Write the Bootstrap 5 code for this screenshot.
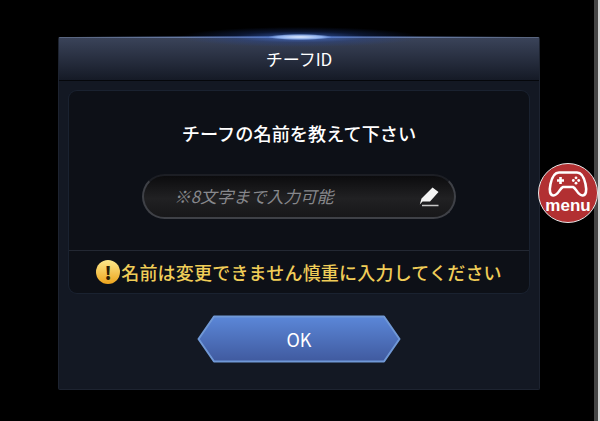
<!doctype html>
<html lang="ja"><head><meta charset="utf-8">
<link href="https://cdn.jsdelivr.net/npm/bootstrap@5.3.0/dist/css/bootstrap.min.css" rel="stylesheet">
<style>
html,body{height:100%;margin:0;background:#000;overflow:hidden}
body{font-family:"Noto Sans CJK JP","Noto Sans",sans-serif;color:#fff}
.stage{width:600px;height:421px;padding:37px 0 0 58px;position:relative;background:linear-gradient(90deg,#000 594px,#454545 594px,#454545 598px,#d8d8d8 598px)}
.glow{position:absolute;left:60px;top:24px;width:480px;height:26px;background:radial-gradient(ellipse 32px 3px at 50% 50%,rgba(230,240,255,.95) 0,rgba(160,195,255,.75) 70%,transparent 100%),radial-gradient(ellipse 120px 10px at 50% 50%,rgba(70,120,230,.7) 0,rgba(35,70,160,.3) 55%,transparent 100%),radial-gradient(ellipse 240px 1.500px at 50% 50%,rgba(130,165,235,.8) 0,transparent 100%)}
.dlg{width:482px;height:353px;background:#131823;border:1px solid #1d2330;border-top-color:#5a6680;border-radius:2px}
.dlg-head{height:43px;background:linear-gradient(#3a4359,#151a26);border-bottom:1px solid #05070b;font-size:17px}
.dlg-body{padding:10px 10px 0}
.well-box{height:202px;background:#0d1017;border-radius:8px;box-shadow:0 0 0 1px #1a2230}
.q-row{height:159px;padding-top:29px}
.q-text{font-size:18.200px;line-height:26px;font-weight:500}
.name-field{width:314px;height:45px;margin-top:28px;border-radius:23px;background:linear-gradient(#0c0c0e,#212123 55%,#171719);border:2px solid #3f4147;border-top-color:#1c1e24;padding:0 15px 0 30px;color:#87888c;font-style:italic;font-size:16.700px}
.warn-row{height:43px;border-top:1px solid #232833;color:#f0cd58;font-size:18px;font-weight:500;letter-spacing:.2px;gap:1px}
.warn-ico{width:24px;height:24px;border-radius:50%;background:linear-gradient(#fde98c,#eda41d);color:#2a1c05;font-weight:900;font-size:18px;line-height:24px;text-align:center;flex:none}
.ok-wrap{margin-top:22px}
.ok-btn{display:block;border:0;background:none;padding:0;width:204px;height:48px;position:relative;color:#fff;font-size:18px;font-weight:400}
.ok-btn svg{position:absolute;inset:0}
.ok-btn span{position:relative}
.menu-badge{position:absolute;left:538px;top:163px;width:60px;height:60px;border-radius:50%;background:#b23032;border:1.500px solid #e8e8e8;color:#fff;font:700 17px/14px "Liberation Sans",sans-serif;padding-top:7px}
.menu-badge svg{display:block;margin:0 auto 2px}
</style></head><body>
<div class="stage">
<div class="glow"></div>
<div class="dlg d-flex flex-column">
  <div class="dlg-head d-flex align-items-center justify-content-center">チーフID</div>
  <div class="dlg-body">
    <div class="well-box d-flex flex-column">
      <div class="q-row text-center d-flex flex-column align-items-center">
        <div class="q-text">チーフの名前を教えて下さい</div>
        <div class="name-field d-flex align-items-center justify-content-between">
          <span>※8文字まで入力可能</span>
          <svg width="20" height="20" viewBox="0 0 20 20"><path d="M13.500 0.500 19.500 5 11 14.500H3.500L0.800 17.500 2.500 11.500Z" fill="#f4f4f4"/><path d="M3 18.500H19.500" stroke="#c8c8c8" stroke-width="1.500"/></svg>
        </div>
      </div>
      <div class="warn-row d-flex align-items-center justify-content-center">
        <span class="warn-ico">!</span><span>名前は変更できません慎重に入力してください</span>
      </div>
    </div>
    <div class="ok-wrap d-flex justify-content-center">
      <button class="ok-btn" type="button">
        <svg width="204" height="48" viewBox="0 0 204 48"><defs><linearGradient id="g" x1="0" y1="0" x2="0" y2="1"><stop offset="0" stop-color="#5b87d8"/><stop offset="1" stop-color="#405a9f"/></linearGradient></defs><path d="M17 1.500H187L202.500 24 187 46.500H17L1.500 24Z" fill="url(#g)" stroke="#7098d6" stroke-width="2" stroke-linejoin="round"/></svg>
        <span>OK</span>
      </button>
    </div>
  </div>
</div>
<div class="menu-badge text-center">
  <svg width="42" height="26" viewBox="0 0 42 26" fill="none" stroke="#fff" stroke-width="2.600"><path d="M12 1.500H30C35 1.500 37 6 38.500 13 40 20 39 24.500 35.500 24.500 31 24.500 29 17 26 16H16C13 17 11 24.500 6.500 24.500 3 24.500 2 20 3.500 13 5 6 7 1.500 12 1.500Z"/><path d="M10 9.500H17M13.500 6V13"/><g fill="#fff" stroke="none"><circle cx="29" cy="6.800" r="1.400"/><circle cx="29" cy="12.200" r="1.400"/><circle cx="26.300" cy="9.500" r="1.400"/><circle cx="31.700" cy="9.500" r="1.400"/></g></svg>
  menu
</div>
</div>
<script src="https://cdn.jsdelivr.net/npm/bootstrap@5.3.0/dist/js/bootstrap.bundle.min.js"></script>
</body></html>
